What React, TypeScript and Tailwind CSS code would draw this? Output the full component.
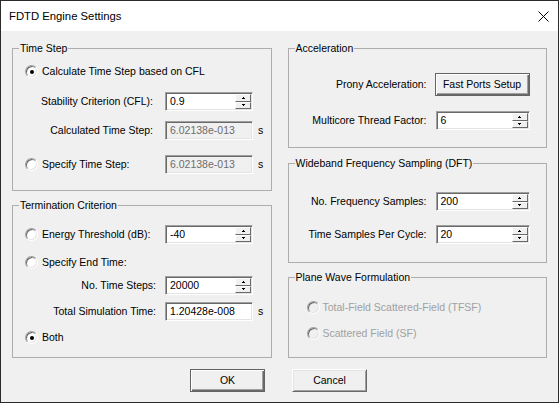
import React from "react";

type Kids = { children?: React.ReactNode };

function Radio({ checked, disabled }: { checked?: boolean; disabled?: boolean }) {
  return (
    <span
      className={`flex h-[13px] w-[13px] shrink-0 items-center justify-center rounded-full border border-t-[#a0a0a0] border-l-[#a0a0a0] border-r-white border-b-white shadow-[inset_1px_1px_0_#696969,inset_-1px_-1px_0_#e3e3e3] ${
        disabled ? "bg-[#f0f0f0]" : "bg-white"
      }`}
    >
      {checked && <span className="h-[4px] w-[4px] rounded-full bg-black" />}
    </span>
  );
}

function SpinBtn({ up }: { up?: boolean }) {
  return (
    <div className="flex flex-1 items-center justify-center border border-t-white border-l-white border-r-[#696969] border-b-[#696969] bg-[#f0f0f0]">
      <svg width="3" height="2" viewBox="0 0 3 2">
        {up ? (
          <path d="M1 0h1v1h1v1H0V1h1z" fill="#000" />
        ) : (
          <path d="M0 0h3v1H2v1H1V1H0z" fill="#000" />
        )}
      </svg>
    </div>
  );
}

function Field({
  value,
  disabled,
  spin,
  w = "w-[88px]",
}: {
  value: string;
  disabled?: boolean;
  spin?: boolean;
  w?: string;
}) {
  return (
    <div
      className={`flex h-[19px] shrink-0 items-stretch border border-t-[#a0a0a0] border-l-[#a0a0a0] border-r-white border-b-white p-[1px] shadow-[inset_1px_1px_0_#696969,inset_-1px_-1px_0_#e3e3e3] ${w} ${
        disabled ? "bg-[#f0f0f0] text-[#6d6d6d]" : "bg-white text-black"
      }`}
    >
      <span className="flex flex-1 items-center pl-[3px]">{value}</span>
      {spin && (
        <div className="flex w-[16px] flex-col">
          <SpinBtn up />
          <SpinBtn />
        </div>
      )}
    </div>
  );
}

function Group({ title, className, children }: Kids & { title: string; className: string }) {
  return (
    <div className={`relative flex flex-col border border-[#adadad] ${className}`}>
      <span className="absolute -top-[7px] left-[6px] bg-[#f0f0f0] px-[1px] leading-[13px]">{title}</span>
      {children}
    </div>
  );
}

function Btn({ children, primary, w }: Kids & { primary?: boolean; w: string }) {
  return (
    <div
      className={`flex h-[23px] items-center justify-center bg-[#f0f0f0] ${w} ${
        primary
          ? "border border-[#646464] shadow-[inset_1px_1px_0_#fff,inset_-1px_-1px_0_#696969,inset_-2px_-2px_0_#a0a0a0]"
          : "border border-t-white border-l-white border-r-[#696969] border-b-[#696969] shadow-[inset_1px_1px_0_#e3e3e3,inset_-1px_-1px_0_#a0a0a0]"
      }`}
    >
      {children}
    </div>
  );
}

export default function App() {
  return (
    <div className="flex h-[403px] w-[559px] flex-col border border-[#2b2b2b] bg-[#f0f0f0] font-['Liberation_Sans',Arial,sans-serif] text-[10.5px] leading-[13px] text-black">
      {/* Title bar */}
      <div className="flex h-[30px] shrink-0 items-center justify-between bg-white pl-[8px] pr-[9px]">
        <span className="text-[11.3px]">FDTD Engine Settings</span>
        <svg width="11" height="11" viewBox="0 0 11 11">
          <path d="M0.5 0.5L10.5 10.5M10.5 0.5L0.5 10.5" stroke="#000" strokeWidth="1" />
        </svg>
      </div>

      <div className="flex gap-[16px] px-[11px]">
        {/* Left column */}
        <div className="flex w-[260px] flex-col">
          <Group title="Time Step" className="mt-[17px] h-[143px] pt-[13px]">
            <div className="flex h-[19px] items-center gap-[4px] pl-[12px]">
              <Radio checked />
              <span>Calculate Time Step based on CFL</span>
            </div>
            <div className="mt-[11px] flex h-[19px] items-center">
              <span className="w-[140px] text-right">Stability Criterion (CFL):</span>
              <div className="ml-[12px]">
                <Field value="0.9" spin />
              </div>
            </div>
            <div className="mt-[10px] flex h-[19px] items-center">
              <span className="w-[140px] text-right">Calculated Time Step:</span>
              <div className="ml-[12px]">
                <Field value="6.02138e-013" disabled />
              </div>
              <span className="ml-[5px]">s</span>
            </div>
            <div className="mt-[15px] flex h-[19px] items-center">
              <div className="flex w-[152px] items-center gap-[4px] pl-[12px]">
                <Radio />
                <span>Specify Time Step:</span>
              </div>
              <Field value="6.02138e-013" disabled />
              <span className="ml-[5px]">s</span>
            </div>
          </Group>

          <Group title="Termination Criterion" className="mt-[14px] h-[153px] pt-[19px]">
            <div className="flex h-[19px] items-center">
              <div className="flex w-[152px] items-center gap-[4px] pl-[12px]">
                <Radio />
                <span>Energy Threshold (dB):</span>
              </div>
              <Field value="-40" spin />
            </div>
            <div className="mt-[9px] flex h-[19px] items-center gap-[4px] pl-[12px]">
              <Radio />
              <span>Specify End Time:</span>
            </div>
            <div className="mt-[4px] flex h-[19px] items-center">
              <span className="w-[143px] text-right">No. Time Steps:</span>
              <div className="ml-[9px]">
                <Field value="20000" spin />
              </div>
            </div>
            <div className="mt-[7px] flex h-[19px] items-center">
              <span className="w-[143px] text-right">Total Simulation Time:</span>
              <div className="ml-[9px]">
                <Field value="1.20428e-008" />
              </div>
              <span className="ml-[5px]">s</span>
            </div>
            <div className="mt-[7px] flex h-[19px] items-center gap-[4px] pl-[12px]">
              <Radio checked />
              <span>Both</span>
            </div>
          </Group>
        </div>

        {/* Right column */}
        <div className="flex w-[260px] flex-col">
          <Group title="Acceleration" className="mt-[17px] h-[100px] pt-[24px]">
            <div className="flex h-[23px] items-center">
              <span className="w-[138px] text-right">Prony Acceleration:</span>
              <div className="ml-[8px]">
                <Btn primary w="w-[95px]">Fast Ports Setup</Btn>
              </div>
            </div>
            <div className="mt-[15px] flex h-[19px] items-center">
              <span className="w-[138px] text-right">Multicore Thread Factor:</span>
              <div className="ml-[9px]">
                <Field value="6" spin w="w-[94px]" />
              </div>
            </div>
          </Group>

          <Group title="Wideband Frequency Sampling (DFT)" className="mt-[15px] h-[100px] pt-[28px]">
            <div className="flex h-[19px] items-center">
              <span className="w-[138px] text-right">No. Frequency Samples:</span>
              <div className="ml-[9px]">
                <Field value="200" spin w="w-[94px]" />
              </div>
            </div>
            <div className="mt-[14px] flex h-[19px] items-center">
              <span className="w-[138px] text-right">Time Samples Per Cycle:</span>
              <div className="ml-[9px]">
                <Field value="20" spin w="w-[94px]" />
              </div>
            </div>
          </Group>

          <Group title="Plane Wave Formulation" className="mt-[14px] h-[81px] pl-[18px] pt-[23px]">
            <div className="flex h-[13px] items-center gap-[3px] text-[#a0a0a0]">
              <Radio disabled />
              <span>Total-Field Scattered-Field (TFSF)</span>
            </div>
            <div className="mt-[13px] flex h-[13px] items-center gap-[3px] text-[#a0a0a0]">
              <Radio disabled />
              <span>Scattered Field (SF)</span>
            </div>
          </Group>
        </div>
      </div>

      {/* Dialog buttons */}
      <div className="mt-[11px] flex gap-[27px] pl-[189px]">
        <Btn primary w="w-[75px]">OK</Btn>
        <Btn w="w-[75px]">Cancel</Btn>
      </div>
    </div>
  );
}
